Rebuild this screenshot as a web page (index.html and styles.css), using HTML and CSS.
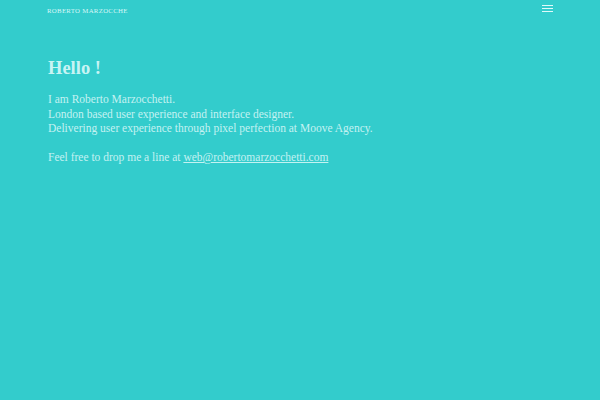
FILE: index.html
```html
<!DOCTYPE html>
<html>
<head>
<meta charset="utf-8">
<link rel="stylesheet" href="styles.css">
</head>
<body>
<header class="top">
  <div class="logo">Roberto Marzocche</div>
  <div class="burger"><span></span><span></span><span></span></div>
</header>
<main class="intro">
  <h1 class="hello">Hello !</h1>
  <p class="lines">I am Roberto Marzocchetti.<br>London based user experience and interface designer.<br>Delivering user experience through pixel perfection at Moove Agency.</p>
  <p class="lines">Feel free to drop me a line at <a class="mail" href="#">web@robertomarzocchetti.com</a></p>
</main>
</body>
</html>
```
FILE: styles.css
```css
html, body {
  margin: 0;
  padding: 0;
  height: 100%;
}
body {
  background: #33cccc;
  color: #c4f2f2;
  font-family: "Liberation Serif", "DejaVu Serif", serif;
}
.top {
  display: flex;
  justify-content: space-between;
  align-items: flex-start;
  padding: 4px 47px 0 47px;
  height: 12px;
}
.logo {
  font-size: 6.8px;
  letter-spacing: 0.3px;
  text-transform: uppercase;
  color: #d8f7f7;
  padding-top: 3px;
}
.burger {
  display: flex;
  flex-direction: column;
  gap: 2px;
  width: 11px;
  padding-top: 1px;
}
.burger span {
  display: block;
  height: 1px;
  background: #e0fafa;
}
.intro {
  padding: 0 48px;
}
.hello {
  margin: 42px 0 13px 0;
  font-size: 18.5px;
  font-weight: bold;
  color: #c8f4f4;
}
.lines {
  margin: 0 0 14.5px 0;
  font-size: 11.5px;
  line-height: 14.5px;
}
.mail {
  color: inherit;
}
```
